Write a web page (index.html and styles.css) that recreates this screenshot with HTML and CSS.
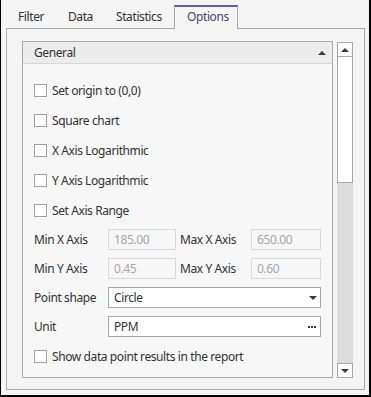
FILE: index.html
```html
<!DOCTYPE html>
<html lang="en">
<head>
	<meta charset="UTF-8">
	<title>Options</title>
	<link rel="stylesheet" href="styles.css">
</head>
<body>
	<div id="win">
		<div class="tabs">
			<div class="tab t1">Filter</div>
			<div class="tab t2">Data</div>
			<div class="tab t3">Statistics</div>
			<div class="tab t4 active">Options</div>
		</div>
		<div class="panel">
			<div class="group">
				<div class="group-head">
					<span>General</span>
					<span class="tri-up"></span>
				</div>
				<div class="group-body">
					<div class="chk-row"><span class="chk"></span>Set origin to (0,0)</div>
					<div class="chk-row"><span class="chk"></span>Square chart</div>
					<div class="chk-row"><span class="chk"></span>X Axis Logarithmic</div>
					<div class="chk-row"><span class="chk"></span>Y Axis Logarithmic</div>
					<div class="chk-row"><span class="chk"></span>Set Axis Range</div>
					<div class="field-row">
						<span class="lbl">Min X Axis</span>
						<span class="inp dis w1">185.00</span>
						<span class="lbl2">Max X Axis</span>
						<span class="inp dis w2">650.00</span>
					</div>
					<div class="field-row">
						<span class="lbl">Min Y Axis</span>
						<span class="inp dis w1">0.45</span>
						<span class="lbl2">Max Y Axis</span>
						<span class="inp dis w2">0.60</span>
					</div>
					<div class="field-row">
						<span class="lbl">Point shape</span>
						<span class="inp wide">Circle<span class="tri-down"></span></span>
					</div>
					<div class="field-row">
						<span class="lbl">Unit</span>
						<span class="inp wide">PPM<span class="dots"><i></i><i></i><i></i></span></span>
					</div>
					<div class="chk-row"><span class="chk"></span>Show data point results in the report</div>
				</div>
			</div>
			<div class="scroll">
				<div class="sb-btn"><span class="tri-up"></span></div>
				<div class="sb-thumb"></div>
				<div class="sb-track"></div>
				<div class="sb-btn"><span class="tri-down"></span></div>
			</div>
		</div>
	</div>
</body>
</html>
```
FILE: styles.css
```css
*{margin:0px;padding:0px;box-sizing:border-box;}
body{
	background:#f5f5f5;
	font-family:"Noto Sans","Open Sans",sans-serif;
	font-size:12px;
	letter-spacing:-0.4px;
	color:#333;
}
#win{
	width:371px;
	height:397px;
	background:#f5f5f5;
	border-left:1px solid #000;
	border-right:2px solid #000;
	border-bottom:2px solid #000;
	padding-left:5px;
}
.tabs{
	display:flex;
	align-items:flex-end;
	height:28px;
}
.tab{
	height:23px;
	padding-left:12px;
	line-height:23px;
	color:#333;
}
.t1{width:50px;}
.t2{width:48px;}
.t3{width:70px;}
.t4{width:64px;}
.tab.active{
	position:relative;
	z-index:1;
	height:24px;
	margin-bottom:-1px;
	border:1px solid #acacac;
	border-top:2px solid #6a5f9a;
	border-bottom:none;
	background:#f5f5f5;
	color:#4a4470;
	line-height:20px;
}
.panel{
	width:359px;
	height:362px;
	border:1px solid #acacac;
	padding:12px 0 0 15px;
	display:flex;
	align-items:flex-start;
	gap:4px;
}
.group{
	width:311px;
	height:337px;
	border:1px solid #acacac;
	background:#f7f7f7;
}
.group-head{
	height:22px;
	background:#ececec;
	border-bottom:1px solid #d6d6d6;
	display:flex;
	align-items:center;
	justify-content:space-between;
	padding:0 6px 0 11px;
}
.tri-up{
	width:0;
	height:0;
	border-left:4px solid transparent;
	border-right:4px solid transparent;
	border-bottom:4px solid #3a3a3a;
}
.tri-down{
	width:0;
	height:0;
	border-left:4px solid transparent;
	border-right:4px solid transparent;
	border-top:4px solid #3a3a3a;
}
.group-body{
	padding:11px 0 0 11px;
}
.chk-row{
	height:30px;
	display:flex;
	align-items:center;
}
.chk{
	width:13px;
	height:13px;
	border:1px solid #a0a0a0;
	background:#fff;
	margin-right:5px;
}
.field-row{
	height:29px;
	display:flex;
	align-items:center;
}
.lbl{width:74px;}
.lbl2{width:75px;padding-left:4px;}
.inp{
	height:21px;
	border:1px solid #a8a8a8;
	background:#fff;
	padding-left:5px;
	display:flex;
	align-items:center;
	justify-content:space-between;
}
.inp.dis{
	border-color:#dadada;
	background:#f7f7f7;
	color:#a8a8a8;
}
.w1{width:68px;}
.w2{width:70px;}
.wide{width:213px;padding-right:3px;}
.dots{
	display:flex;
	gap:1px;
	margin-right:1px;
}
.dots i{
	width:2px;
	height:2px;
	background:#3a3a3a;
}
.scroll{
	width:16px;
	height:336px;
	margin-top:1px;
	display:flex;
	flex-direction:column;
}
.sb-btn{
	height:15px;
	border:1px solid #a8a8a8;
	background:#fff;
	display:flex;
	align-items:center;
	justify-content:center;
}
.sb-thumb{
	height:126px;
	border:1px solid #a8a8a8;
	border-top:none;
	background:#fff;
}
.sb-track{
	flex:1;
	background:#dcdcdc;
}
```
